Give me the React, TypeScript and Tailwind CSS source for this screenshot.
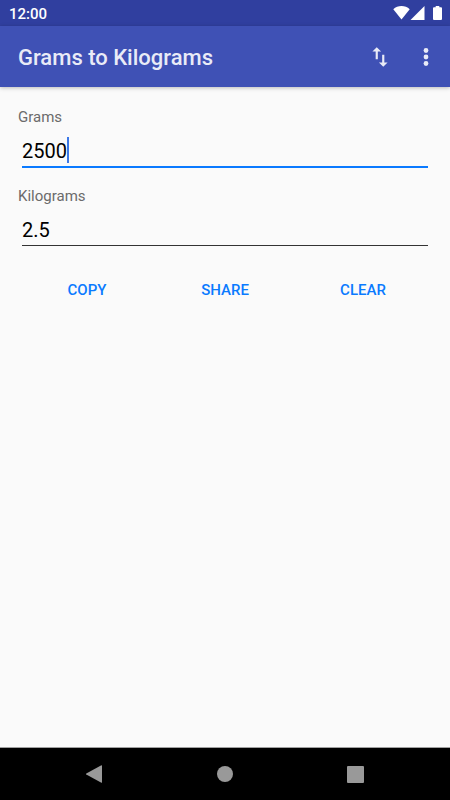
import React, { useState } from 'react';

const StatusBar = () => (
  <div className="flex h-[26px] items-center justify-between bg-[#303f9f] pl-[9px] pr-2 text-white">
    <span className="pt-0.5 text-[15px] leading-5 font-medium">12:00</span>
    <div className="flex items-center">
      <svg width="17" height="14" viewBox="0 0 17 14" fill="currentColor" aria-hidden="true">
        <path d="M8.500 13.500 0.300 3.200C2.500 1 5.400 0 8.500 0s6 1 8.200 3.200z" />
      </svg>
      <svg width="15" height="14" viewBox="0 0 15 14" fill="currentColor" aria-hidden="true">
        <path d="M14.500 0v14H0.500z" />
      </svg>
      <svg className="ml-2" width="9" height="14" viewBox="0 0 9 14" fill="currentColor" aria-hidden="true">
        <path d="M2.700 0h3.600v1.300h1.700q1 0 1 1V13q0 1-1 1H1q-1 0-1-1V2.300q0-1 1-1h1.700z" />
      </svg>
    </div>
  </div>
);

const AppBar = ({ title, onSwap }: { title: string; onSwap: () => void }) => (
  <header className="z-10 flex h-[61px] items-center bg-[#3f51b5] pl-[18px] pr-[11px] text-[#e9ebf7] shadow-[0_1px_4px_rgba(0,0,0,0.25)]">
    <h1 className="flex-1 pt-0.5 text-[22px] leading-7 font-medium">{title}</h1>
    <button type="button" aria-label="Swap units" onClick={onSwap} className="mr-5">
      <svg width="26" height="26" viewBox="0 0 24 24" fill="currentColor" aria-hidden="true">
        <path d="M16 17.010V10h-2v7.010h-3L15 21l4-3.990zM9 3 5 6.990h3V14h2V6.990h3z" />
      </svg>
    </button>
    <button type="button" aria-label="More options">
      <svg width="26" height="26" viewBox="0 0 24 24" fill="currentColor" aria-hidden="true">
        <circle cx="12" cy="6" r="2.200" />
        <circle cx="12" cy="12" r="2.200" />
        <circle cx="12" cy="18" r="2.200" />
      </svg>
    </button>
  </header>
);

const NavBar = () => (
  <nav className="grid h-[53px] grid-cols-3 border-t border-[#a0a0a0] bg-black px-[30px] text-[#999999]">
    <button type="button" aria-label="Back" className="flex items-center justify-center">
      <svg width="18" height="18" viewBox="0 0 18 18" fill="currentColor" aria-hidden="true">
        <path d="M15.400 0.300Q16 0 16 0.700V17.300Q16 18 15.400 17.700L0.300 9.400Q-0.300 9 0.300 8.600z" />
      </svg>
    </button>
    <button type="button" aria-label="Home" className="flex items-center justify-center">
      <span className="size-4 rounded-full bg-[#999999]" />
    </button>
    <button type="button" aria-label="Recent apps" className="flex items-center justify-center">
      <span className="size-[17px] rounded-[1px] bg-[#999999]" />
    </button>
  </nav>
);

const App = () => {
  const [swapped, setSwapped] = useState(false);
  const [value, setValue] = useState('2500');

  const from = swapped ? 'Kilograms' : 'Grams';
  const to = swapped ? 'Grams' : 'Kilograms';
  const result = value === '' ? '' : String(swapped ? Number(value) * 1000 : Number(value) / 1000);

  const labelClass = 'block text-[15px] leading-5 text-[#6b6b6b]';
  const actionClass = 'h-10 text-[15px] leading-5 font-medium text-[#0a7aff]';

  return (
    <div className="flex min-h-screen flex-col bg-[#fafafa] font-[Roboto,sans-serif]">
      <StatusBar />
      <AppBar title={`${from} to ${to}`} onSwap={() => setSwapped(!swapped)} />

      <main className="flex-1 px-[18px] pt-5">
        <label htmlFor="from" className={labelClass}>
          {from}
        </label>
        <div className="mx-1 mt-2 flex h-[33px] items-start border-b-2 border-[#0a7aff]">
          <input
            id="from"
            type="text"
            inputMode="decimal"
            value={value}
            onChange={(e) => setValue(e.target.value)}
            className="h-8 max-w-full text-xl text-black caret-transparent outline-none [field-sizing:content]"
          />
          <span className="mt-0.5 h-[26px] w-0.5 bg-[#3b78e7]" />
        </div>

        <label htmlFor="to" className={`mt-[18px] ${labelClass}`}>
          {to}
        </label>
        <div className="mx-1 mt-2 h-8 border-b border-[#333333]">
          <input
            id="to"
            type="text"
            readOnly
            value={result}
            className="h-8 w-full text-xl text-black outline-none"
          />
        </div>

        <div className="mt-6 grid grid-cols-3">
          <button type="button" className={actionClass} onClick={() => navigator.clipboard?.writeText(result)}>
            COPY
          </button>
          <button type="button" className={actionClass} onClick={() => navigator.share?.({ text: result })}>
            SHARE
          </button>
          <button type="button" className={actionClass} onClick={() => setValue('')}>
            CLEAR
          </button>
        </div>
      </main>

      <NavBar />
    </div>
  );
};

export default App;
